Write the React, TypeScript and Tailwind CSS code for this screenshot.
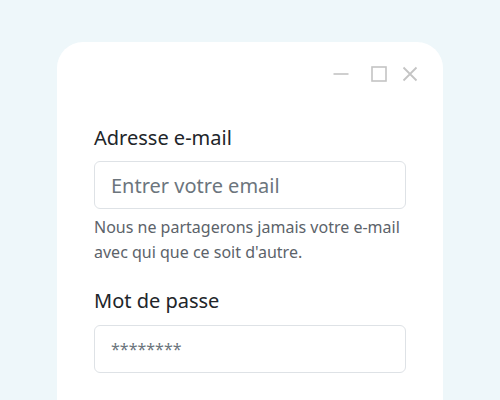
export default function App() {
  return (
    <div
      className="w-[500px] h-[400px] overflow-hidden bg-[#eef7fa] pt-[42px] pl-[57px] pr-[57px]"
      style={{ fontFamily: '"Noto Sans", "Open Sans", sans-serif' }}
    >
      <div className="bg-white rounded-t-[26px] h-[400px] px-[37px]">
        {/* window controls */}
        <div className="flex justify-end items-center pt-[24px] -mr-[12px] text-[#c4c4c4]">
          <svg width="16" height="16" viewBox="0 0 16 16" fill="none" stroke="currentColor" strokeWidth="1.6">
            <path d="M0.5 8h15" />
          </svg>
          <svg className="ml-[22px]" width="16" height="16" viewBox="0 0 16 16" fill="none" stroke="currentColor" strokeWidth="1.6">
            <rect x="1" y="1" width="14" height="14" />
          </svg>
          <svg className="ml-[15px]" width="16" height="16" viewBox="0 0 16 16" fill="none" stroke="currentColor" strokeWidth="1.8">
            <path d="M1.5 1.5l13 13M14.5 1.5l-13 13" />
          </svg>
        </div>

        <form className="mt-[41px]">
          <label className="block text-[20px] leading-[30px] text-[#212529] mb-2">Adresse e-mail</label>
          <input
            type="email"
            placeholder="Entrer votre email"
            className="block w-full h-[48px] rounded-[6px] border border-[#dee2e6] px-4 text-[20px] text-[#212529] placeholder:text-[#6c757d] outline-none"
          />
          <p className="mt-1.5 text-[16px] leading-[25px] text-[#5c636a]">
            Nous ne partagerons jamais votre e-mail avec qui que ce soit d'autre.
          </p>

          <label className="block mt-[21px] text-[20px] leading-[30px] text-[#212529] mb-[9px]">Mot de passe</label>
          <input
            type="password"
            placeholder="********"
            className="block w-full h-[48px] rounded-[6px] border border-[#dee2e6] px-4 text-[16px] text-[#212529] placeholder:text-[#6c757d] outline-none"
          />
        </form>
      </div>
    </div>
  );
}
